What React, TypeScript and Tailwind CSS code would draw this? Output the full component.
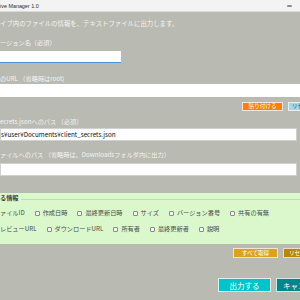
import React from 'react';

const jp = { fontFamily: '"Noto Sans CJK JP", "Noto Sans", sans-serif' };

interface CheckProps {
    label: string;
}

const Check: React.FC<CheckProps> = ({ label }) => {
    return (
        <div className="flex items-center gap-[3px] shrink-0">
            <div className="w-[5px] h-[5px] border border-[#8a8a8a] bg-[#f4f4f4] rounded-[1px]"></div>
            <span className="text-[6.2px] leading-[8px] text-[#4b4b4b] whitespace-nowrap">{label}</span>
        </div>
    );
};

const App: React.FC = () => {
    return (
        <div className="w-[300px] h-[300px] overflow-hidden bg-[#b9bab1] flex flex-col" style={jp}>
            {/* Title bar */}
            <div className="h-[12px] shrink-0 bg-[#f3f3f3] border-b border-[#dadada] flex items-center justify-between pr-[8px]">
                <span className="text-[5.4px] leading-[8px] text-[#2b2b2b] whitespace-nowrap" style={{ fontFamily: '"Liberation Sans", sans-serif' }}>
                    ive Manager 1.0
                </span>
                <div className="w-[5px] h-[2px] bg-[#8c8c8c] rounded-[1px]"></div>
            </div>

            {/* Body */}
            <div className="flex flex-col">
                <p className="mt-[8px] text-[6.4px] leading-[8px] text-[#f4f4f4] whitespace-nowrap">
                    イブ内のファイルの情報を、テキストファイルに出力します。
                </p>

                <p className="mt-[11px] text-[6.2px] leading-[8px] text-[#f4f4f4] whitespace-nowrap">ージョン名（必須）</p>
                <div className="mt-[4px] w-[121px] h-[12px] bg-white border-b border-[#4f8fd6]"></div>

                <p className="mt-[12px] text-[6.2px] leading-[8px] text-[#f4f4f4] whitespace-nowrap">のURL （省略時はroot)</p>
                <div className="mt-[1px] w-[300px] h-[13px] bg-white"></div>

                <div className="mt-[5px] flex justify-start gap-[5px] pl-[242px]">
                    <button className="w-[41px] shrink-0 h-[9px] bg-[#ff8000] border border-[#f0e6dc] text-white text-[5.6px] leading-[7px] flex items-center justify-center">
                        貼り付ける
                    </button>
                    <button className="shrink-0 px-[3px] h-[9px] bg-[#a9d6e8] border border-[#e6eef2] text-[#3a5a6a] text-[5.6px] leading-[7px] flex items-center whitespace-nowrap">
                        リセット
                    </button>
                </div>

                <p className="mt-[7px] text-[6.2px] leading-[8px] text-[#f4f4f4] whitespace-nowrap">ecrets.jsonへのパス （必須）</p>
                <div className="mt-[2px] w-[297px] h-[13px] bg-white border border-[#d0d0d0] flex items-center">
                    <span className="text-[6.3px] leading-[8px] text-[#111] whitespace-nowrap">s¥user¥Documents¥client_secrets.json</span>
                </div>

                <p className="mt-[10px] text-[6.2px] leading-[8px] text-[#f4f4f4] whitespace-nowrap">
                    ァイルへのパス （省略時は、Downloadsフォルダ内に出力）
                </p>
                <div className="mt-[4px] w-[297px] h-[13px] bg-white border border-[#d0d0d0]"></div>

                {/* Output fields frame */}
                <div className="mt-[17px] h-[51px] bg-[#dbf7cc] flex flex-col">
                    <div className="flex items-center mt-[1px]">
                        <span className="text-[6.2px] leading-[8px] font-bold text-[#3f3f3f] whitespace-nowrap">る情報</span>
                        <div className="flex-1 ml-[2px] mt-[3px] h-px bg-[#c2dcb5]"></div>
                    </div>
                    <div className="mt-[7px] flex items-center gap-[10px]">
                        <span className="text-[6.2px] leading-[8px] text-[#4b4b4b] whitespace-nowrap">ァイルID</span>
                        <Check label="作成日時" />
                        <Check label="最終更新日時" />
                        <Check label="サイズ" />
                        <Check label="バージョン番号" />
                        <Check label="共有の有無" />
                    </div>
                    <div className="mt-[8px] flex items-center gap-[10px]">
                        <span className="text-[6.2px] leading-[8px] text-[#4b4b4b] whitespace-nowrap">レビューURL</span>
                        <Check label="ダウンロードURL" />
                        <Check label="所有者" />
                        <Check label="最終更新者" />
                        <Check label="説明" />
                    </div>
                </div>

                <div className="mt-[4px] flex justify-start gap-[5px] pl-[233px]">
                    <button className="w-[45px] shrink-0 h-[10px] bg-[#dca21e] border border-[#efe6d2] text-white text-[5.6px] leading-[7px] flex items-center justify-center">
                        すべて取得
                    </button>
                    <button className="shrink-0 px-[5px] h-[10px] bg-[#b8860b] border border-[#e8dcc4] text-white text-[5.6px] leading-[7px] flex items-center whitespace-nowrap">
                        リセット
                    </button>
                </div>

                <div className="mt-[20px] flex justify-start gap-[5px] pl-[218px]">
                    <button className="w-[53px] shrink-0 h-[14px] bg-[#00c4c8] border border-[#dff0f0] text-white text-[7.5px] leading-[9px] flex items-center justify-center">
                        出力する
                    </button>
                    <button className="shrink-0 px-[6px] h-[14px] bg-[#00878b] border border-[#d6e6e6] text-white text-[7.5px] leading-[9px] flex items-center whitespace-nowrap">
                        キャンセル
                    </button>
                </div>
            </div>
        </div>
    );
};

export default App;
